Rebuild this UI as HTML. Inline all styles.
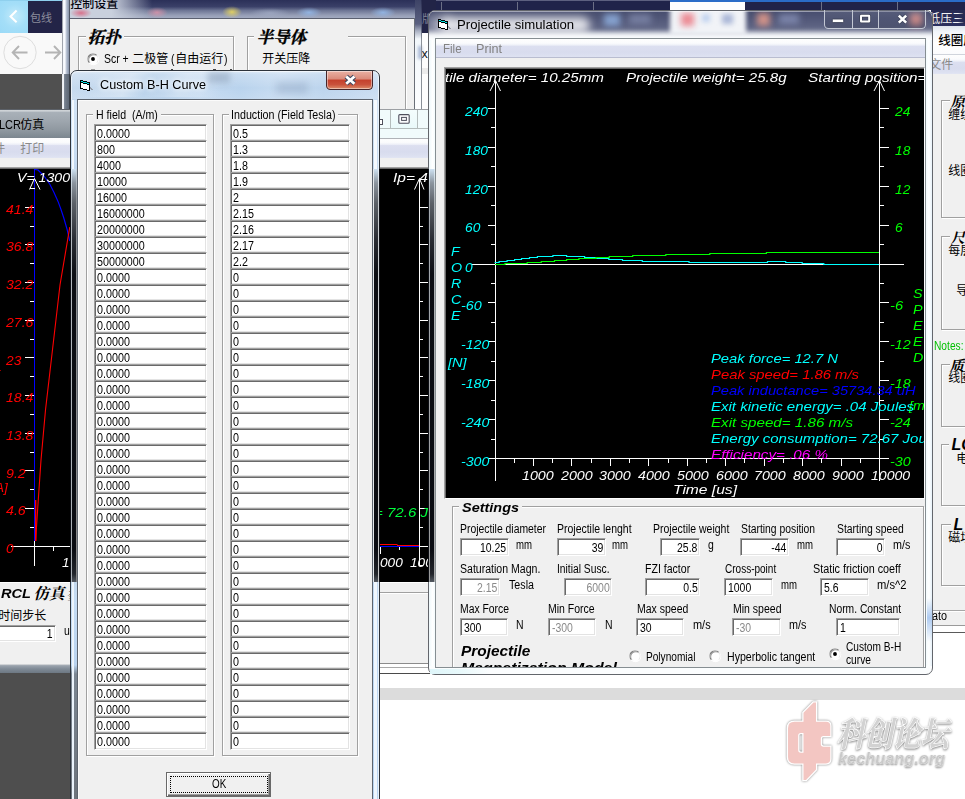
<!DOCTYPE html>
<html><head><meta charset="utf-8"><title>Projectile simulation</title>
<style>
html,body{margin:0;padding:0;}
body{width:965px;height:799px;overflow:hidden;background:#fff;position:relative;font-family:"Liberation Sans",sans-serif;font-size:12px;}
div,svg.a{position:absolute;box-sizing:border-box;}
.t{white-space:pre;}
.f{background:#fff;border-top:1px solid #a0a0a0;border-left:1px solid #a0a0a0;border-right:1px solid #fff;border-bottom:1px solid #fff;box-shadow:inset 1px 1px 0 #696969,inset -1px -1px 0 #e3e3e3;}
.g{border:1px solid #a0a0a0;box-shadow:1px 1px 0 #fff, inset 1px 1px 0 #fff;}
.r{border-radius:50%;background:#fff;border:1px solid;border-color:#6e6e6e #e8e8e8 #fdfdfd #6e6e6e;box-shadow:inset 1px 1px 0 #9a9a9a, 0.5px 0.5px 0 #fff;transform:scale(.96);}
.r.on::after{content:"";position:absolute;left:3px;top:3px;width:4px;height:4px;border-radius:50%;background:#000;}
svg.a text{font-family:"Liberation Sans","Noto Sans CJK SC",sans-serif;}
svg.a text.s{font-family:"Liberation Serif","Noto Serif CJK SC",serif;font-weight:bold;}
</style></head><body>
<div style="left:62px;top:0px;width:903px;height:10px;background:#20234a"></div>
<div style="left:420px;top:0px;width:250px;height:1px;background:#5d6080"></div>
<div style="left:670px;top:0px;width:295px;height:2px;background:#2a6cc8"></div>
<div style="left:670px;top:2px;width:75px;height:8px;background:#fdfdfe"></div>
<div style="left:441.3px;top:1.5px;width:1px;height:8.5px;background:#6c6f86"></div>
<div style="left:517.3px;top:1.5px;width:1px;height:8.5px;background:#6c6f86"></div>
<div style="left:593.0px;top:1.5px;width:1px;height:8.5px;background:#6c6f86"></div>
<div style="left:820.9px;top:1.5px;width:1px;height:8.5px;background:#6c6f86"></div>
<div style="left:897.2px;top:1.5px;width:1px;height:8.5px;background:#6c6f86"></div>
<div style="left:0px;top:0px;width:28px;height:32.5px;background:radial-gradient(circle at 15px 16px,#c4ebfb 0,#a4def8 12px,#9bdaf7 100%)"></div>
<svg class="a" style="left:8px;top:9px" width="12" height="15"><path d="M8.6 1.6 L2.6 7.4 L8.6 13.2" fill="none" stroke="#fff" stroke-width="2.1"/></svg>
<div style="left:28px;top:1px;width:34px;height:31.5px;background:#232447"></div>
<div style="left:0px;top:0px;width:62px;height:1px;background:#8fd0ee"></div>
<svg class="a" style="left:29.40px;top:11.00px;" width="26.4" height="15.4"><text x="1.1" y="11" font-size="11" fill="#8b8c9c">包线</text></svg>
<div style="left:0px;top:32.5px;width:62px;height:41.5px;background:#f9f9f9"></div>
<svg class="a" style="left:0;top:32px" width="62" height="42"><circle cx="20" cy="20.5" r="16.2" fill="none" stroke="#dedede" stroke-width="1"/><path d="M27.5 20.5H13M19 14l-6.3 6.5 6.3 6.5M45 20.5h15M54 14l6.3 6.5-6.3 6.5" fill="none" stroke="#b4b4b4" stroke-width="1.9"/></svg>
<div style="left:0px;top:74px;width:62px;height:35px;background:#505050"></div>
<div style="left:0px;top:673px;width:72px;height:126px;background:#4e4e4e"></div>
<div style="left:380px;top:688px;width:585px;height:11.5px;background:#dcdcdc"></div>
<div style="left:420px;top:0px;width:16px;height:32.5px;background:#222447"></div>
<div style="left:420px;top:32.5px;width:16px;height:79px;background:#fdfdfd"></div>
<div style="left:420px;top:67.5px;width:16px;height:6px;background:#ececec"></div>
<svg class="a" style="left:421.40px;top:11.50px;" width="15.4" height="15.4"><text x="1.1" y="11" font-size="11" fill="#7e8095">版</text></svg>
<div class="t" style="top:47.00px;font-size:12.5px;line-height:14px;color:#111;left:421.5px;transform-origin:0 0;">x1</div>
<div style="left:62px;top:0px;width:360px;height:111px;background:#f0f0f0"></div>
<div style="left:62px;top:0px;width:353px;height:18.5px;background:linear-gradient(180deg,#2b3058 0,#3a4068 35%,#6d7594 55%,#969eb6 80%,#a6aec4 100%)"></div>
<div style="left:62px;top:0px;width:90px;height:18.5px;background:linear-gradient(90deg,#c9d0dd 0,#c9d0dd 55%,rgba(201,208,221,0) 100%)"></div>
<div style="left:70px;top:8px;width:22px;height:10px;background:radial-gradient(ellipse at center,rgba(220,90,120,.8) 0,rgba(220,90,120,0) 70%)"></div>
<div style="left:146px;top:7px;width:22px;height:11px;background:radial-gradient(ellipse at center,rgba(235,150,170,.7) 0,rgba(235,150,170,0) 70%)"></div>
<div style="left:222px;top:6px;width:20px;height:12px;background:radial-gradient(ellipse at center,rgba(240,220,90,.85) 0,rgba(240,220,90,0) 70%)"></div>
<div style="left:296px;top:7px;width:26px;height:11px;background:radial-gradient(ellipse at center,rgba(150,190,240,.8) 0,rgba(150,190,240,0) 70%)"></div>
<div style="left:370px;top:7px;width:26px;height:11px;background:radial-gradient(ellipse at center,rgba(150,190,240,.8) 0,rgba(150,190,240,0) 70%)"></div>
<div style="left:250px;top:8px;width:40px;height:10px;background:radial-gradient(ellipse at center,rgba(170,180,205,.6) 0,rgba(170,180,205,0) 70%)"></div>
<svg class="a" style="left:69.10px;top:-4.20px;" width="52.8" height="16.8"><text x="1.2" y="12" font-size="12" font-weight="500" fill="#05050f">控制设置</text></svg>
<div style="left:69px;top:18px;width:346px;height:1px;background:#5b6070"></div>
<div style="left:62px;top:0px;width:8px;height:74px;background:linear-gradient(90deg,#9a9ea6 0,#a8acb4 1px,#f4f7fc 1.5px,#fbfcff 3px,#c6cfde 4px,#a3aec2 5.5px,#8893a8 7px,#4f5664 7.2px,#4f5664 8px)"></div>
<div style="left:62px;top:74px;width:8px;height:37px;background:linear-gradient(90deg,#e9edf2 0,#f2f4f7 1.6px,#7f8997 2.2px,#6d7785 4px,#5e6876 7px,#3a4048 7.2px,#3a4048 8px)"></div>
<div style="left:414px;top:18px;width:1px;height:93px;background:#6a6f78"></div>
<div style="left:415px;top:0px;width:7px;height:111px;background:linear-gradient(180deg,#3d4366 0,#5a6080 24px,#a9b0c2 31px,#f2f7fb 39px,#fdfeff 100%)"></div>
<div style="left:418px;top:46px;width:3.5px;height:13px;background:rgba(140,160,200,.7);filter:blur(1.5px)"></div>
<div style="left:421px;top:0px;width:1px;height:111px;background:linear-gradient(180deg,#2a2e52 0,#60657c 30px,#8a9098 40px,#8a9098 100%)"></div>
<div class="g" style="left:78px;top:36px;width:156px;height:75px;border-bottom:none"></div>
<div style="left:86px;top:30px;width:37.5px;height:14px;background:#f0f0f0"></div>
<svg class="a" style="left:86.35px;top:26.10px;" width="39.6" height="23.1"><text class="s" transform="translate(1.65,16.50) skewX(-14)" font-size="16.5" fill="#000" stroke="#000" stroke-width="0.35">拓扑</text></svg>
<div class="g" style="left:247px;top:36px;width:159px;height:75px;border-bottom:none"></div>
<div style="left:254px;top:30px;width:94px;height:14px;background:#f0f0f0"></div>
<svg class="a" style="left:254.55px;top:26.10px;" width="56.1" height="23.1"><text class="s" transform="translate(1.65,16.50) skewX(-14)" font-size="16.5" fill="#000" stroke="#000" stroke-width="0.35">半导体</text></svg>
<div class="r on" style="left:86.5px;top:52.5px;width:12px;height:12px;"></div>
<div class="t" style="top:52.00px;font-size:12px;line-height:14px;color:#000;left:103.8px;transform-origin:0 0;transform:scaleX(0.870);">Scr +</div>
<svg class="a" style="left:130.60px;top:51.00px;" width="40.8" height="16.8"><text x="1.2" y="12" font-size="12" fill="#000">二极管</text></svg>
<div class="t" style="top:52.00px;font-size:12px;line-height:14px;color:#000;left:171px;transform-origin:0 0;transform:scaleX(0.870);">(</div>
<svg class="a" style="left:174.00px;top:51.00px;" width="52.8" height="16.8"><text x="1.2" y="12" font-size="12" fill="#000">自由运行</text></svg>
<div class="t" style="top:52.00px;font-size:12px;line-height:14px;color:#000;left:223.5px;transform-origin:0 0;transform:scaleX(0.870);">)</div>
<svg class="a" style="left:260.80px;top:51.00px;" width="52.8" height="16.8"><text x="1.2" y="12" font-size="12" fill="#000">开关压降</text></svg>
<div style="left:91px;top:69px;width:4px;height:1px;background:#9a9a9a"></div>
<div style="left:171px;top:68.5px;width:2px;height:1.5px;background:#444"></div>
<div style="left:213px;top:68.5px;width:3px;height:1.5px;background:#444"></div>
<div style="left:230px;top:68.5px;width:2px;height:1.5px;background:#444"></div>
<div style="left:0px;top:109px;width:72px;height:29px;background:linear-gradient(180deg,#5c6168 0,#5c6168 1px,#d2d6da 1.2px,#c0c6cc 2.5px,#a9b1b9 10%,#9ea6ae 42%,#8e979f 75%,#7c868f 100%)"></div>
<div style="left:380px;top:109px;width:56px;height:29.5px;background:#f1fbfc"></div>
<div style="left:380px;top:109px;width:56px;height:1px;background:#9c9fa3"></div>
<div style="left:390px;top:110px;width:1px;height:19px;background:#b4bcbc"></div>
<div style="left:417px;top:110px;width:1px;height:19px;background:#b4bcbc"></div>
<div style="left:380px;top:128px;width:56px;height:1px;background:#b4bcbc"></div>
<div style="left:391px;top:110px;width:26px;height:18px;background:linear-gradient(180deg,#f4fdfd,#eaf9fa)"></div>
<svg class="a" style="left:397px;top:113px" width="14" height="12"><rect x="1.8" y="1.6" width="10.4" height="8.6" rx="1" fill="#fbfbfd" stroke="#4f4f5c" stroke-width="1.1"/><rect x="4.6" y="4.4" width="4.8" height="3" fill="none" stroke="#4f4f5c" stroke-width="1"/></svg>
<div style="left:377px;top:119px;width:6px;height:5.5px;border:1px solid #50505c;background:#fff"></div>
<div class="t" style="top:118.00px;font-size:12px;line-height:14px;color:#000;left:-1.5px;transform-origin:0 0;transform:scaleX(0.916);">LCR</div>
<svg class="a" style="left:19.00px;top:116.60px;" width="28.8" height="16.8"><text x="1.2" y="12" font-size="12" fill="#000">仿真</text></svg>
<div style="left:0px;top:138px;width:436px;height:19.5px;background:linear-gradient(180deg,#fefefe 0,#fafbfd 22%,#eef0f8 32%,#dcdff0 38%,#d8dcee 70%,#dde1f1 92%,#e2e5f3 100%)"></div>
<div style="left:380px;top:138px;width:56px;height:1px;background:#b0b3b8"></div>
<svg class="a" style="left:-8.20px;top:141.20px;" width="16.8" height="16.8"><text x="1.2" y="12" font-size="12" fill="#8a8a8a">件</text></svg>
<svg class="a" style="left:19.30px;top:141.20px;" width="28.8" height="16.8"><text x="1.2" y="12" font-size="12" fill="#8a8a8a">打印</text></svg>
<div style="left:0px;top:157.5px;width:436px;height:11px;background:#f0f0f0"></div>
<div style="left:-2px;top:167px;width:440px;height:416px;background:#000;border-top:1px solid #a0a0a0;border-bottom:1px solid #fff;box-shadow:inset 0 1px 0 #696969"></div>
<div style="left:0px;top:583px;width:436px;height:81px;background:#f0f0f0"></div>
<div style="left:380px;top:592px;width:56px;height:1px;background:#a0a0a0"></div>
<div style="left:380px;top:593px;width:56px;height:1px;background:#fff"></div>
<div style="left:380px;top:663px;width:56px;height:1px;background:#8c8c8c"></div>
<div style="left:380px;top:664px;width:56px;height:9px;background:#fff"></div>
<div style="left:380px;top:667px;width:56px;height:1px;background:#a9a9a9"></div>
<div style="left:380px;top:673px;width:56px;height:1px;background:#4a4a4a"></div>
<div style="left:0px;top:664px;width:72px;height:9px;background:linear-gradient(180deg,#e8e8e8 0,#9aa3ad 18%,#7f8a96 55%,#6d7883 100%)"></div>
<div class="t" style="top:586.00px;font-size:13.33px;line-height:15px;color:#000;font-weight:bold;font-style:italic;left:0.8px;transform-origin:0 0;transform:scaleX(1.095);">RCL</div>
<svg class="a" style="left:31.95px;top:582.50px;" width="37.2" height="21.7"><text class="s" transform="translate(1.55,15.50) skewX(-14)" font-size="15.5" fill="#000">仿真</text></svg>
<svg class="a" style="left:64.95px;top:582.50px;" width="21.7" height="21.7"><text class="s" transform="translate(1.55,15.50) skewX(-14)" font-size="15.5" fill="#000">参</text></svg>
<svg class="a" style="left:-3.20px;top:608.30px;" width="52.8" height="16.8"><text x="1.2" y="12" font-size="12" fill="#000">时间步长</text></svg>
<div class="f" style="left:-3px;top:625px;width:58.5px;height:17px;"></div>
<div class="t" style="top:627.00px;font-size:12px;line-height:14px;color:#000;right:912.5px;transform-origin:100% 0;transform:scaleX(0.870);">1</div>
<div class="t" style="top:624.00px;font-size:12px;line-height:14px;color:#000;left:64px;transform-origin:0 0;transform:scaleX(0.870);">u</div>
<svg class="a" style="left:0;top:0" width="436" height="600" shape-rendering="auto"><path d="M34.5 169L34.5 541" stroke="#0000ff" stroke-width="1"/><path d="M35.7 500L35.7 541" stroke="#ff0000" stroke-width="1.4"/><path d="M34.5 541L34.5 566" stroke="#fff" stroke-width="1"/><path d="M11 546.5L72 546.5" stroke="#fff" stroke-width="1"/><path d="M29.5 189.5L34.5 178.5L40 189.5M30 188.5H35" fill="none" stroke="#fff" stroke-width="1"/><path d="M25 207.5L34 207.5" stroke="#fff" stroke-width="1"/><path d="M30 226.5L34 226.5" stroke="#fff" stroke-width="1"/><path d="M25 244.5L34 244.5" stroke="#fff" stroke-width="1"/><path d="M30 263.5L34 263.5" stroke="#fff" stroke-width="1"/><path d="M25 282.5L34 282.5" stroke="#fff" stroke-width="1"/><path d="M30 301.5L34 301.5" stroke="#fff" stroke-width="1"/><path d="M25 320.5L34 320.5" stroke="#fff" stroke-width="1"/><path d="M30 339.5L34 339.5" stroke="#fff" stroke-width="1"/><path d="M25 357.5L34 357.5" stroke="#fff" stroke-width="1"/><path d="M30 376.5L34 376.5" stroke="#fff" stroke-width="1"/><path d="M25 395.5L34 395.5" stroke="#fff" stroke-width="1"/><path d="M30 414.5L34 414.5" stroke="#fff" stroke-width="1"/><path d="M25 433.5L34 433.5" stroke="#fff" stroke-width="1"/><path d="M30 452.5L34 452.5" stroke="#fff" stroke-width="1"/><path d="M25 470.5L34 470.5" stroke="#fff" stroke-width="1"/><path d="M30 489.5L34 489.5" stroke="#fff" stroke-width="1"/><path d="M25 508.5L34 508.5" stroke="#fff" stroke-width="1"/><path d="M30 527.5L34 527.5" stroke="#fff" stroke-width="1"/><path d="M35 169.5L38 170L44 176L49.7 184L54 192.5L58 201.4L61 209.5L63.8 218L67 229L69.8 241" fill="none" stroke="#0000ff" stroke-width="1.15" stroke-linejoin="round"/><path d="M69.8 227L60 285L51.3 360L45.5 410L41 460L37.6 510L35.6 541" fill="none" stroke="#ff0000" stroke-width="1.1"/><path d="M53.5 547L53.5 551" stroke="#fff" stroke-width="1"/><path d="M419.5 180L419.5 566" stroke="#fff" stroke-width="1"/><path d="M414.5 189.5L419.5 178.5L424 189.5" fill="none" stroke="#fff" stroke-width="1"/><path d="M420 207.5L428 207.5" stroke="#fff" stroke-width="1"/><path d="M420 226.5L423 226.5" stroke="#fff" stroke-width="1"/><path d="M420 244.5L428 244.5" stroke="#fff" stroke-width="1"/><path d="M420 263.5L423 263.5" stroke="#fff" stroke-width="1"/><path d="M420 282.5L428 282.5" stroke="#fff" stroke-width="1"/><path d="M420 301.5L423 301.5" stroke="#fff" stroke-width="1"/><path d="M420 320.5L428 320.5" stroke="#fff" stroke-width="1"/><path d="M420 339.5L423 339.5" stroke="#fff" stroke-width="1"/><path d="M420 357.5L428 357.5" stroke="#fff" stroke-width="1"/><path d="M420 376.5L423 376.5" stroke="#fff" stroke-width="1"/><path d="M420 395.5L428 395.5" stroke="#fff" stroke-width="1"/><path d="M420 414.5L423 414.5" stroke="#fff" stroke-width="1"/><path d="M420 433.5L428 433.5" stroke="#fff" stroke-width="1"/><path d="M420 452.5L423 452.5" stroke="#fff" stroke-width="1"/><path d="M420 470.5L428 470.5" stroke="#fff" stroke-width="1"/><path d="M420 489.5L423 489.5" stroke="#fff" stroke-width="1"/><path d="M420 508.5L428 508.5" stroke="#fff" stroke-width="1"/><path d="M420 527.5L423 527.5" stroke="#fff" stroke-width="1"/><path d="M420 546.5L428 546.5" stroke="#fff" stroke-width="1"/><path d="M420 565.5L423 565.5" stroke="#fff" stroke-width="1"/><path d="M380 546.5L428 546.5" stroke="#fff" stroke-width="1"/><path d="M380 546.5L419 546.5" stroke="#0000ff" stroke-width="1"/><path d="M380 544.5L397.5 544.5" stroke="#ff0000" stroke-width="1"/><path d="M397 545.5L419 545.5" stroke="#ff0000" stroke-width="1"/><path d="M380.5 547L380.5 554" stroke="#fff" stroke-width="1"/><path d="M399.5 547L399.5 550" stroke="#fff" stroke-width="1"/></svg>
<div class="t" style="top:171.00px;font-size:12.5px;line-height:14px;color:#fff;font-style:italic;left:17px;transform-origin:0 0;transform:scaleX(1.130);">V= 1300</div>
<div class="t" style="top:171.00px;font-size:12.5px;line-height:14px;color:#fff;font-style:italic;left:393.2px;transform-origin:0 0;transform:scaleX(1.243);">Ip= 4</div>
<div class="t" style="top:203.00px;font-size:12.5px;line-height:14px;color:#ff0000;font-style:italic;left:5.5px;transform-origin:0 0;transform:scaleX(1.124);">41.4</div>
<div class="t" style="top:240.00px;font-size:12.5px;line-height:14px;color:#ff0000;font-style:italic;left:5.5px;transform-origin:0 0;transform:scaleX(1.124);">36.8</div>
<div class="t" style="top:278.00px;font-size:12.5px;line-height:14px;color:#ff0000;font-style:italic;left:5.5px;transform-origin:0 0;transform:scaleX(1.124);">32.2</div>
<div class="t" style="top:316.00px;font-size:12.5px;line-height:14px;color:#ff0000;font-style:italic;left:5.5px;transform-origin:0 0;transform:scaleX(1.124);">27.6</div>
<div class="t" style="top:354.00px;font-size:12.5px;line-height:14px;color:#ff0000;font-style:italic;left:5.5px;transform-origin:0 0;transform:scaleX(1.100);">23</div>
<div class="t" style="top:391.00px;font-size:12.5px;line-height:14px;color:#ff0000;font-style:italic;left:5.5px;transform-origin:0 0;transform:scaleX(1.124);">18.4</div>
<div class="t" style="top:429.00px;font-size:12.5px;line-height:14px;color:#ff0000;font-style:italic;left:5.5px;transform-origin:0 0;transform:scaleX(1.124);">13.8</div>
<div class="t" style="top:467.00px;font-size:12.5px;line-height:14px;color:#ff0000;font-style:italic;left:5.5px;transform-origin:0 0;transform:scaleX(1.134);">9.2</div>
<div class="t" style="top:504.00px;font-size:12.5px;line-height:14px;color:#ff0000;font-style:italic;left:5.5px;transform-origin:0 0;transform:scaleX(1.134);">4.6</div>
<div class="t" style="top:542.00px;font-size:12.5px;line-height:14px;color:#ff0000;font-style:italic;left:5.5px;transform-origin:0 0;transform:scaleX(1.100);">0</div>
<div class="t" style="top:368.00px;font-size:12.5px;line-height:14px;color:#ff0000;font-style:italic;left:-4px;transform-origin:0 0;transform:scaleX(1.080);">[</div>
<div class="t" style="top:481.00px;font-size:12.5px;line-height:14px;color:#ff0000;font-style:italic;left:-5px;transform-origin:0 0;transform:scaleX(1.080);">A]</div>
<div class="t" style="top:556.00px;font-size:12.5px;line-height:14px;color:#fff;font-style:italic;left:61.5px;transform-origin:0 0;transform:scaleX(1.080);">1</div>
<div class="t" style="top:506.00px;font-size:12.5px;line-height:14px;color:#00fa3c;font-style:italic;left:373.6px;transform-origin:0 0;transform:scaleX(1.205);">= 72.6 J</div>
<div class="t" style="top:556.00px;font-size:12.5px;line-height:14px;color:#fff;font-style:italic;left:379.6px;transform-origin:0 0;transform:scaleX(1.093);">000</div>
<div class="t" style="top:556.00px;font-size:12.5px;line-height:14px;color:#fff;font-style:italic;left:409.8px;transform-origin:0 0;transform:scaleX(1.093);">100</div>
<div style="left:931px;top:10px;width:34px;height:16px;background:linear-gradient(180deg,#262a52,#2c3160)"></div>
<svg class="a" style="left:927.30px;top:11.00px;" width="40.8" height="16.8"><text x="1.2" y="12" font-size="12" fill="#f2f2f2">低压三</text></svg>
<div style="left:958px;top:12px;width:7px;height:12px;background:linear-gradient(90deg,rgba(38,42,82,0),#262a52)"></div>
<div style="left:931px;top:26px;width:34px;height:28.5px;background:linear-gradient(180deg,#dfe5ee 0,#f3f6fa 20%,#fff 60%,#fafbfd 100%)"></div>
<svg class="a" style="left:936.55px;top:31.70px;" width="42.5" height="17.5"><text x="1.25" y="12.5" font-size="12.5" font-weight="500" fill="#000">线圈层</text></svg>
<div style="left:931px;top:54.5px;width:34px;height:19px;background:linear-gradient(180deg,#fefefe 0,#fafbfd 22%,#eef0f8 32%,#dcdff0 38%,#d8dcee 70%,#dde1f1 92%,#e2e5f3 100%)"></div>
<div style="left:931px;top:54px;width:34px;height:1px;background:#d0d4dc"></div>
<svg class="a" style="left:928.30px;top:57.00px;" width="28.8" height="16.8"><text x="1.2" y="12" font-size="12" fill="#8a8a8a">文件</text></svg>
<div style="left:931px;top:73.5px;width:34px;height:537px;background:#f0f0f0"></div>
<div style="left:931px;top:610px;width:34px;height:15px;background:#f0f0f0;border-top:1px solid #a7a7a7;box-shadow:inset 0 1px 0 #fff"></div>
<div style="left:931px;top:625px;width:34px;height:1px;background:#9a9a9a"></div>
<div style="left:931px;top:626px;width:34px;height:6px;background:#fff"></div>
<div style="left:931px;top:632px;width:34px;height:1px;background:#5a5a5a"></div>
<div class="t" style="top:609.00px;font-size:12px;line-height:14px;color:#000;left:932.2px;transform-origin:0 0;transform:scaleX(0.900);">ato</div>
<div class="t" style="top:339.00px;font-size:12px;line-height:14px;color:#00c000;left:934px;transform-origin:0 0;transform:scaleX(0.851);">Notes:</div>
<div class="g" style="left:941px;top:100px;width:40px;height:118px;"></div>
<div class="g" style="left:941px;top:236px;width:40px;height:94px;"></div>
<div class="g" style="left:941px;top:364px;width:40px;height:63px;"></div>
<div class="g" style="left:941px;top:444px;width:40px;height:62px;"></div>
<div class="g" style="left:941px;top:524px;width:40px;height:62px;"></div>
<div style="left:950px;top:93px;width:15px;height:16px;background:#f0f0f0"></div>
<svg class="a" style="left:949.05px;top:92.00px;" width="20.3" height="20.3"><text class="s" transform="translate(1.45,14.50) skewX(-14)" font-size="14.5" fill="#000">原</text></svg>
<svg class="a" style="left:947.30px;top:107.00px;" width="28.8" height="16.8"><text x="1.2" y="12" font-size="12" fill="#000">缠绕</text></svg>
<svg class="a" style="left:947.30px;top:162.50px;" width="28.8" height="16.8"><text x="1.2" y="12" font-size="12" fill="#000">线圈</text></svg>
<div style="left:950px;top:229px;width:15px;height:16px;background:#f0f0f0"></div>
<svg class="a" style="left:949.05px;top:227.50px;" width="20.3" height="20.3"><text class="s" transform="translate(1.45,14.50) skewX(-14)" font-size="14.5" fill="#000">尺</text></svg>
<svg class="a" style="left:947.30px;top:243.00px;" width="28.8" height="16.8"><text x="1.2" y="12" font-size="12" fill="#000">每层</text></svg>
<svg class="a" style="left:955.30px;top:283.00px;" width="16.8" height="16.8"><text x="1.2" y="12" font-size="12" fill="#000">导</text></svg>
<div style="left:950px;top:357px;width:15px;height:16px;background:#f0f0f0"></div>
<svg class="a" style="left:948.25px;top:355.70px;" width="20.3" height="20.3"><text class="s" transform="translate(1.45,14.50) skewX(-14)" font-size="14.5" fill="#000">质</text></svg>
<svg class="a" style="left:947.30px;top:370.30px;" width="28.8" height="16.8"><text x="1.2" y="12" font-size="12" fill="#000">线圈</text></svg>
<div style="left:949px;top:436px;width:16px;height:15px;background:#f0f0f0"></div>
<div class="t" style="top:436.00px;font-size:16px;line-height:17px;color:#000;font-weight:bold;font-style:italic;left:951.5px;transform-origin:0 0;">LC</div>
<svg class="a" style="left:955.30px;top:450.50px;" width="16.8" height="16.8"><text x="1.2" y="12" font-size="12" fill="#000">电</text></svg>
<div style="left:951px;top:516px;width:14px;height:15px;background:#f0f0f0"></div>
<div class="t" style="top:516.00px;font-size:16px;line-height:17px;color:#000;font-weight:bold;font-style:italic;left:953.6px;transform-origin:0 0;">L</div>
<svg class="a" style="left:947.30px;top:530.00px;" width="28.8" height="16.8"><text x="1.2" y="12" font-size="12" fill="#000">磁场</text></svg>
<div style="left:428px;top:10px;width:505px;height:665px;border-radius:7px;border:1px solid #63666c;background:#fbfdfe;box-shadow:inset 0 0 0 1px rgba(255,255,255,.3)"></div>
<div style="left:429px;top:11px;width:503px;height:28px;overflow:hidden;border-radius:6px 6px 0 0;background:#f9fbfd">
<div style="left:-8px;top:-6px;width:520px;height:26.5px;background:linear-gradient(180deg,#3f4566,#555b7c 60%,#666c8a);filter:blur(2.6px)"></div>
<div style="left:241px;top:-6px;width:75.5px;height:30px;background:#f1f3f7;filter:blur(2.2px)"></div>
<div style="left:11px;top:6px;width:150px;height:16px;background:rgba(255,255,255,.8);filter:blur(4.5px);border-radius:8px"></div>
<div style="left:0px;top:4px;width:22px;height:18px;background:rgba(255,255,255,.35);filter:blur(4px)"></div>
<div style="left:175px;top:3px;width:16px;height:12px;background:rgba(150,185,235,.75);filter:blur(3px)"></div>
<div style="left:200px;top:3px;width:22px;height:10px;background:rgba(140,150,185,.6);filter:blur(3px)"></div>
<div style="left:252px;top:2px;width:13px;height:13px;background:rgba(235,120,130,.85);filter:blur(3px)"></div>
<div style="left:273px;top:3px;width:8px;height:8px;background:rgba(170,195,235,.7);filter:blur(2.5px)"></div>
<div style="left:293px;top:3px;width:11px;height:10px;background:rgba(150,165,205,.75);filter:blur(2.5px)"></div>
<div style="left:328px;top:2px;width:13px;height:13px;background:rgba(240,160,140,.8);filter:blur(3px)"></div>
<div style="left:350px;top:3px;width:20px;height:10px;background:rgba(140,150,190,.7);filter:blur(3px)"></div>
<div style="left:481px;top:2px;width:12px;height:13px;background:rgba(250,160,150,.95);filter:blur(3px)"></div>
<div style="left:0px;top:0px;width:503px;height:1px;background:rgba(255,255,255,.45)"></div>
</div>
<div style="left:429px;top:40px;width:6px;height:626px;background:linear-gradient(90deg,#eef8fb,#ffffff 60%,#f4fbfd)"></div>
<div style="left:926px;top:40px;width:6px;height:626px;background:linear-gradient(90deg,#f4fbfd,#ffffff 50%,#e6f1f9)"></div>
<div style="left:428px;top:169px;width:8px;height:413px;background:#0c0e14"></div>
<div style="left:429px;top:169px;width:1px;height:413px;background:linear-gradient(180deg,#e0eef8 0,#a4a9ae 30px,#999 100%)"></div>
<div style="left:430px;top:169px;width:4px;height:413px;background:linear-gradient(180deg,#cfe2f2 0,#8b949e 14px,#5c6168 34px,#2a2d34 70px,#0c0e14 105px,#0a0c12 380px,#22252b 405px,#5a6068 414px)"></div>
<div style="left:434px;top:169px;width:1px;height:413px;background:linear-gradient(180deg,#e0eef8 0,#b0b4b8 30px,#a8a8a8 100%)"></div>
<div style="left:435px;top:169px;width:1px;height:413px;background:#33363a"></div>
<div style="left:927px;top:598px;width:5px;height:44px;background:linear-gradient(180deg,rgba(170,200,240,0),rgba(170,200,240,.95) 45%,rgba(170,200,240,0))"></div>
<div style="left:430px;top:668.5px;width:60px;height:5px;background:linear-gradient(90deg,#dff6fa,#e8f9fb 50%,rgba(255,255,255,0))"></div>
<svg class="a" style="left:438px;top:19px" width="14" height="12" shape-rendering="crispEdges"><path d="M0 0h3v1h4v1h3v9h-3v-1h-4v-1h-3z" fill="#000"/><path d="M1 3h2v1h4v1h2v5h-2v-1h-4v-1h-2z" fill="#fff"/><path d="M1 1h2v1h-2zM3 2h4v1h-4zM7 3h2v1h-2z" fill="#00e4e4"/><path d="M10 7h1v1h1v1h1v1h-2v-1h-1z" fill="#8a8f98" opacity=".8"/></svg>
<div class="t" style="top:18.00px;font-size:12.5px;line-height:14px;color:#000;left:457px;transform-origin:0 0;transform:scaleX(1.053);">Projectile simulation</div>
<div style="left:824px;top:10px;width:102px;height:18.5px;border:1px solid #c3c8d4;border-top:none;border-radius:0 0 4.5px 4.5px;background:linear-gradient(180deg,rgba(120,126,150,.35),rgba(70,76,100,.25) 50%,rgba(40,46,70,.35))"></div>
<div style="left:852px;top:10px;width:1px;height:18px;background:#c3c8d4"></div>
<div style="left:878px;top:10px;width:1px;height:18px;background:#c3c8d4"></div>
<svg class="a" style="left:824px;top:10px" width="102" height="19"><rect x="8.3" y="9" width="11.4" height="3.6" rx=".8" fill="#fff" stroke="#3c4258" stroke-width=".9"/><rect x="37" y="5.8" width="8.2" height="5.8" rx=".5" fill="none" stroke="#3c4258" stroke-width="3.4"/><rect x="37" y="5.8" width="8.2" height="5.8" rx=".3" fill="none" stroke="#fff" stroke-width="2"/><path d="M74.8 5.6l7.4 7M82.2 5.6l-7.4 7" stroke="#3c4258" stroke-width="4"/><path d="M74.8 5.6l7.4 7M82.2 5.6l-7.4 7" stroke="#fff" stroke-width="2.6"/></svg>
<div style="left:435px;top:38px;width:491px;height:630px;background:#f0f0f0;border:1px solid #868e92"></div>
<div style="left:436px;top:39px;width:489px;height:19px;background:linear-gradient(180deg,#fefefe 0,#fafbfd 22%,#eef0f8 32%,#dcdff0 38%,#d8dcee 70%,#dde1f1 92%,#e2e5f3 100%)"></div>
<div style="left:436px;top:57px;width:489px;height:1px;background:#b9bdd0"></div>
<div class="t" style="top:42.00px;font-size:12.5px;line-height:14px;color:#828282;left:443.3px;transform-origin:0 0;transform:scaleX(0.923);">File</div>
<div class="t" style="top:42.00px;font-size:12.5px;line-height:14px;color:#828282;left:476.4px;transform-origin:0 0;transform:scaleX(1.012);">Print</div>
<div style="left:444px;top:67px;width:481px;height:432px;background:#000;border-left:1px solid #a0a0a0;border-top:1px solid #a0a0a0;border-right:1px solid #fff;border-bottom:1px solid #fff;box-shadow:inset 1px 1px 0 #696969"></div>
<svg class="a" style="left:0;top:0" width="965" height="500"><path d="M495.5 81V481" fill="none" stroke="#fff" stroke-width="1"/><path d="M472 264.5H904" fill="none" stroke="#fff" stroke-width="1"/><path d="M495 458.5H879" fill="none" stroke="#fff" stroke-width="1"/><path d="M879.5 81V481" fill="none" stroke="#fff" stroke-width="1"/><path d="M490 91L495.5 80.5L500.5 91" fill="none" stroke="#fff" stroke-width="1"/><path d="M874 91L879.5 80.5L884.5 91" fill="none" stroke="#fff" stroke-width="1"/><path d="M488 108.5H495" fill="none" stroke="#fff" stroke-width="1"/><path d="M879 108.5H889" fill="none" stroke="#fff" stroke-width="1"/><path d="M491 127.5H495" fill="none" stroke="#fff" stroke-width="1"/><path d="M879 127.5H884" fill="none" stroke="#fff" stroke-width="1"/><path d="M488 147.5H495" fill="none" stroke="#fff" stroke-width="1"/><path d="M879 147.5H889" fill="none" stroke="#fff" stroke-width="1"/><path d="M491 166.5H495" fill="none" stroke="#fff" stroke-width="1"/><path d="M879 166.5H884" fill="none" stroke="#fff" stroke-width="1"/><path d="M488 186.5H495" fill="none" stroke="#fff" stroke-width="1"/><path d="M879 186.5H889" fill="none" stroke="#fff" stroke-width="1"/><path d="M491 205.5H495" fill="none" stroke="#fff" stroke-width="1"/><path d="M879 205.5H884" fill="none" stroke="#fff" stroke-width="1"/><path d="M488 225.5H495" fill="none" stroke="#fff" stroke-width="1"/><path d="M879 225.5H889" fill="none" stroke="#fff" stroke-width="1"/><path d="M491 244.5H495" fill="none" stroke="#fff" stroke-width="1"/><path d="M879 244.5H884" fill="none" stroke="#fff" stroke-width="1"/><path d="M488 264.5H495" fill="none" stroke="#fff" stroke-width="1"/><path d="M879 264.5H889" fill="none" stroke="#fff" stroke-width="1"/><path d="M491 283.5H495" fill="none" stroke="#fff" stroke-width="1"/><path d="M879 283.5H884" fill="none" stroke="#fff" stroke-width="1"/><path d="M488 302.5H495" fill="none" stroke="#fff" stroke-width="1"/><path d="M879 302.5H889" fill="none" stroke="#fff" stroke-width="1"/><path d="M491 322.5H495" fill="none" stroke="#fff" stroke-width="1"/><path d="M879 322.5H884" fill="none" stroke="#fff" stroke-width="1"/><path d="M488 341.5H495" fill="none" stroke="#fff" stroke-width="1"/><path d="M879 341.5H889" fill="none" stroke="#fff" stroke-width="1"/><path d="M491 361.5H495" fill="none" stroke="#fff" stroke-width="1"/><path d="M879 361.5H884" fill="none" stroke="#fff" stroke-width="1"/><path d="M488 380.5H495" fill="none" stroke="#fff" stroke-width="1"/><path d="M879 380.5H889" fill="none" stroke="#fff" stroke-width="1"/><path d="M491 400.5H495" fill="none" stroke="#fff" stroke-width="1"/><path d="M879 400.5H884" fill="none" stroke="#fff" stroke-width="1"/><path d="M488 419.5H495" fill="none" stroke="#fff" stroke-width="1"/><path d="M879 419.5H889" fill="none" stroke="#fff" stroke-width="1"/><path d="M491 439.5H495" fill="none" stroke="#fff" stroke-width="1"/><path d="M879 439.5H884" fill="none" stroke="#fff" stroke-width="1"/><path d="M488 458.5H495" fill="none" stroke="#fff" stroke-width="1"/><path d="M879 458.5H889" fill="none" stroke="#fff" stroke-width="1"/><path d="M533.5 458V466" fill="none" stroke="#fff" stroke-width="1"/><path d="M514.5 458V463" fill="none" stroke="#fff" stroke-width="1"/><path d="M571.5 458V466" fill="none" stroke="#fff" stroke-width="1"/><path d="M552.5 458V463" fill="none" stroke="#fff" stroke-width="1"/><path d="M610.5 458V466" fill="none" stroke="#fff" stroke-width="1"/><path d="M591.5 458V463" fill="none" stroke="#fff" stroke-width="1"/><path d="M648.5 458V466" fill="none" stroke="#fff" stroke-width="1"/><path d="M629.5 458V463" fill="none" stroke="#fff" stroke-width="1"/><path d="M687.5 458V466" fill="none" stroke="#fff" stroke-width="1"/><path d="M668.5 458V463" fill="none" stroke="#fff" stroke-width="1"/><path d="M725.5 458V466" fill="none" stroke="#fff" stroke-width="1"/><path d="M706.5 458V463" fill="none" stroke="#fff" stroke-width="1"/><path d="M764.5 458V466" fill="none" stroke="#fff" stroke-width="1"/><path d="M744.5 458V463" fill="none" stroke="#fff" stroke-width="1"/><path d="M802.5 458V466" fill="none" stroke="#fff" stroke-width="1"/><path d="M783.5 458V463" fill="none" stroke="#fff" stroke-width="1"/><path d="M841.5 458V466" fill="none" stroke="#fff" stroke-width="1"/><path d="M821.5 458V463" fill="none" stroke="#fff" stroke-width="1"/><path d="M860.5 458V463" fill="none" stroke="#fff" stroke-width="1"/><path d="M494.6 262.5H499.1V261.5H507.1V260.5H514.6V259.5H521.5V258.5H529.5V257.5H537.4V256.5H552.9V255.5H566.6V256.5H584.6V257.5H596V258.5H608.8V259.5H622.5V260.5H642.3V261.5H689V262.5H767.5V261.5H785.7V262.5H802.2V263.5H823.8V264.5H879V264.5" fill="none" stroke="#00ffff" stroke-width="1.2"/><path d="M495 264.5H505V263.5H527.2V262.5H541.3V261.5H554.5V260.5H566.6V259.5H578.9V258.5H596V257.5H609.3V256.5H632.7V255.5H665.8V254.5H709.8V253.5H766.4V252.5H879V252.5" fill="none" stroke="#00ff00" stroke-width="1.2"/></svg>
<div style="left:446px;top:69px;width:478px;height:429px;overflow:hidden">
<div class="t" style="top:calc(-69px + 70.00px);font-size:13px;line-height:15px;color:#fff;font-style:italic;left:-43.89999999999998px;transform-origin:0 0;transform:scaleX(1.167);">Projectile diameter= 10.25mm</div>
<div class="t" style="top:calc(-69px + 70.00px);font-size:13px;line-height:15px;color:#fff;font-style:italic;left:180px;transform-origin:0 0;transform:scaleX(1.160);">Projectile weight= 25.8g</div>
<div class="t" style="top:calc(-69px + 70.00px);font-size:13px;line-height:15px;color:#fff;font-style:italic;left:361.5px;transform-origin:0 0;transform:scaleX(1.175);">Starting position= -44mm</div>
<div class="t" style="top:calc(-69px + 104.00px);font-size:13px;line-height:15px;color:#00ffff;font-style:italic;left:19.19999999999999px;transform-origin:0 0;transform:scaleX(1.058);">240</div>
<div class="t" style="top:calc(-69px + 143.00px);font-size:13px;line-height:15px;color:#00ffff;font-style:italic;left:19.19999999999999px;transform-origin:0 0;transform:scaleX(1.058);">180</div>
<div class="t" style="top:calc(-69px + 182.00px);font-size:13px;line-height:15px;color:#00ffff;font-style:italic;left:19.19999999999999px;transform-origin:0 0;transform:scaleX(1.058);">120</div>
<div class="t" style="top:calc(-69px + 220.00px);font-size:13px;line-height:15px;color:#00ffff;font-style:italic;left:19.19999999999999px;transform-origin:0 0;transform:scaleX(1.058);">60</div>
<div class="t" style="top:calc(-69px + 260.00px);font-size:13px;line-height:15px;color:#00ffff;font-style:italic;left:19.19999999999999px;transform-origin:0 0;transform:scaleX(1.058);">0</div>
<div class="t" style="top:calc(-69px + 298.00px);font-size:13px;line-height:15px;color:#00ffff;font-style:italic;left:15.399999999999977px;transform-origin:0 0;transform:scaleX(1.102);">-60</div>
<div class="t" style="top:calc(-69px + 337.00px);font-size:13px;line-height:15px;color:#00ffff;font-style:italic;left:15.399999999999977px;transform-origin:0 0;transform:scaleX(1.090);">-120</div>
<div class="t" style="top:calc(-69px + 376.00px);font-size:13px;line-height:15px;color:#00ffff;font-style:italic;left:15.399999999999977px;transform-origin:0 0;transform:scaleX(1.090);">-180</div>
<div class="t" style="top:calc(-69px + 415.00px);font-size:13px;line-height:15px;color:#00ffff;font-style:italic;left:15.399999999999977px;transform-origin:0 0;transform:scaleX(1.090);">-240</div>
<div class="t" style="top:calc(-69px + 454.00px);font-size:13px;line-height:15px;color:#00ffff;font-style:italic;left:15.399999999999977px;transform-origin:0 0;transform:scaleX(1.090);">-300</div>
<div class="t" style="top:calc(-69px + 104.00px);font-size:13px;line-height:15px;color:#00ff00;font-style:italic;left:448.6px;transform-origin:0 0;transform:scaleX(1.058);">24</div>
<div class="t" style="top:calc(-69px + 143.00px);font-size:13px;line-height:15px;color:#00ff00;font-style:italic;left:448.6px;transform-origin:0 0;transform:scaleX(1.058);">18</div>
<div class="t" style="top:calc(-69px + 182.00px);font-size:13px;line-height:15px;color:#00ff00;font-style:italic;left:448.6px;transform-origin:0 0;transform:scaleX(1.058);">12</div>
<div class="t" style="top:calc(-69px + 220.00px);font-size:13px;line-height:15px;color:#00ff00;font-style:italic;left:448.6px;transform-origin:0 0;transform:scaleX(1.058);">6</div>
<div class="t" style="top:calc(-69px + 298.00px);font-size:13px;line-height:15px;color:#00ff00;font-style:italic;left:444px;transform-origin:0 0;transform:scaleX(1.129);">-6</div>
<div class="t" style="top:calc(-69px + 337.00px);font-size:13px;line-height:15px;color:#00ff00;font-style:italic;left:444px;transform-origin:0 0;transform:scaleX(1.102);">-12</div>
<div class="t" style="top:calc(-69px + 376.00px);font-size:13px;line-height:15px;color:#00ff00;font-style:italic;left:444px;transform-origin:0 0;transform:scaleX(1.102);">-18</div>
<div class="t" style="top:calc(-69px + 415.00px);font-size:13px;line-height:15px;color:#00ff00;font-style:italic;left:444px;transform-origin:0 0;transform:scaleX(1.102);">-24</div>
<div class="t" style="top:calc(-69px + 454.00px);font-size:13px;line-height:15px;color:#00ff00;font-style:italic;left:444px;transform-origin:0 0;transform:scaleX(1.102);">-30</div>
<div class="t" style="top:calc(-69px + 244.00px);font-size:13px;line-height:15px;color:#00ffff;font-style:italic;left:5px;transform-origin:0 0;transform:scaleX(1.100);">F</div>
<div class="t" style="top:calc(-69px + 260.00px);font-size:13px;line-height:15px;color:#00ffff;font-style:italic;left:5px;transform-origin:0 0;transform:scaleX(1.100);">O</div>
<div class="t" style="top:calc(-69px + 276.00px);font-size:13px;line-height:15px;color:#00ffff;font-style:italic;left:5px;transform-origin:0 0;transform:scaleX(1.100);">R</div>
<div class="t" style="top:calc(-69px + 292.00px);font-size:13px;line-height:15px;color:#00ffff;font-style:italic;left:5px;transform-origin:0 0;transform:scaleX(1.100);">C</div>
<div class="t" style="top:calc(-69px + 308.00px);font-size:13px;line-height:15px;color:#00ffff;font-style:italic;left:5px;transform-origin:0 0;transform:scaleX(1.100);">E</div>
<div class="t" style="top:calc(-69px + 355.00px);font-size:13px;line-height:15px;color:#00ffff;font-style:italic;left:2.1999999999999886px;transform-origin:0 0;transform:scaleX(1.120);">[N]</div>
<div class="t" style="top:calc(-69px + 286.00px);font-size:13px;line-height:15px;color:#00ff00;font-style:italic;left:467px;transform-origin:0 0;transform:scaleX(1.100);">S</div>
<div class="t" style="top:calc(-69px + 302.00px);font-size:13px;line-height:15px;color:#00ff00;font-style:italic;left:467px;transform-origin:0 0;transform:scaleX(1.100);">P</div>
<div class="t" style="top:calc(-69px + 318.00px);font-size:13px;line-height:15px;color:#00ff00;font-style:italic;left:467px;transform-origin:0 0;transform:scaleX(1.100);">E</div>
<div class="t" style="top:calc(-69px + 334.00px);font-size:13px;line-height:15px;color:#00ff00;font-style:italic;left:467px;transform-origin:0 0;transform:scaleX(1.100);">E</div>
<div class="t" style="top:calc(-69px + 350.00px);font-size:13px;line-height:15px;color:#00ff00;font-style:italic;left:467px;transform-origin:0 0;transform:scaleX(1.100);">D</div>
<div class="t" style="top:calc(-69px + 398.00px);font-size:13px;line-height:15px;color:#00ff00;font-style:italic;left:463px;transform-origin:0 0;transform:scaleX(1.100);">[m/s]</div>
<div class="t" style="top:calc(-69px + 468.00px);font-size:13px;line-height:15px;color:#fff;font-style:italic;left:75.70000000000005px;transform-origin:0 0;transform:scaleX(1.096);">1000</div>
<div class="t" style="top:calc(-69px + 468.00px);font-size:13px;line-height:15px;color:#fff;font-style:italic;left:114.5px;transform-origin:0 0;transform:scaleX(1.096);">2000</div>
<div class="t" style="top:calc(-69px + 468.00px);font-size:13px;line-height:15px;color:#fff;font-style:italic;left:153.29999999999995px;transform-origin:0 0;transform:scaleX(1.096);">3000</div>
<div class="t" style="top:calc(-69px + 468.00px);font-size:13px;line-height:15px;color:#fff;font-style:italic;left:192.0px;transform-origin:0 0;transform:scaleX(1.096);">4000</div>
<div class="t" style="top:calc(-69px + 468.00px);font-size:13px;line-height:15px;color:#fff;font-style:italic;left:230.79999999999995px;transform-origin:0 0;transform:scaleX(1.096);">5000</div>
<div class="t" style="top:calc(-69px + 468.00px);font-size:13px;line-height:15px;color:#fff;font-style:italic;left:269.6px;transform-origin:0 0;transform:scaleX(1.096);">6000</div>
<div class="t" style="top:calc(-69px + 468.00px);font-size:13px;line-height:15px;color:#fff;font-style:italic;left:308.4px;transform-origin:0 0;transform:scaleX(1.096);">7000</div>
<div class="t" style="top:calc(-69px + 468.00px);font-size:13px;line-height:15px;color:#fff;font-style:italic;left:347.20000000000005px;transform-origin:0 0;transform:scaleX(1.096);">8000</div>
<div class="t" style="top:calc(-69px + 468.00px);font-size:13px;line-height:15px;color:#fff;font-style:italic;left:385.9px;transform-origin:0 0;transform:scaleX(1.096);">9000</div>
<div class="t" style="top:calc(-69px + 468.00px);font-size:13px;line-height:15px;color:#fff;font-style:italic;left:425.20000000000005px;transform-origin:0 0;transform:scaleX(1.084);">10000</div>
<div class="t" style="top:calc(-69px + 482.00px);font-size:13px;line-height:15px;color:#fff;font-style:italic;left:226.5px;transform-origin:0 0;transform:scaleX(1.200);">Time [us]</div>
<div class="t" style="top:calc(-69px + 351.00px);font-size:13px;line-height:15px;color:#00ffff;font-style:italic;left:265.29999999999995px;transform-origin:0 0;transform:scaleX(1.137);">Peak force= 12.7 N</div>
<div class="t" style="top:calc(-69px + 367.00px);font-size:13px;line-height:15px;color:#ff0000;font-style:italic;left:265.29999999999995px;transform-origin:0 0;transform:scaleX(1.141);">Peak speed= 1.86 m/s</div>
<div class="t" style="top:calc(-69px + 383.00px);font-size:13px;line-height:15px;color:#0000ff;font-style:italic;left:265.29999999999995px;transform-origin:0 0;transform:scaleX(1.125);">Peak inductance= 35734.34 uH</div>
<div class="t" style="top:calc(-69px + 399.00px);font-size:13px;line-height:15px;color:#00ffff;font-style:italic;left:265.29999999999995px;transform-origin:0 0;transform:scaleX(1.154);">Exit kinetic energy= .04 Joules</div>
<div class="t" style="top:calc(-69px + 415.00px);font-size:13px;line-height:15px;color:#00ff00;font-style:italic;left:265.29999999999995px;transform-origin:0 0;transform:scaleX(1.166);">Exit speed= 1.86 m/s</div>
<div class="t" style="top:calc(-69px + 431.00px);font-size:13px;line-height:15px;color:#00ffff;font-style:italic;left:265.29999999999995px;transform-origin:0 0;transform:scaleX(1.155);">Energy consumption= 72.67 Joules</div>
<div class="t" style="top:calc(-69px + 447.00px);font-size:13px;line-height:15px;color:#ff00ff;font-style:italic;left:265.29999999999995px;transform-origin:0 0;transform:scaleX(1.169);">Efficiency= .06 %</div>
</div>
<div style="left:436px;top:497px;width:489px;height:170px;overflow:hidden">
<div class="g" style="left:16px;top:9px;width:472px;height:200px;"></div>
<div style="left:23px;top:2px;width:63px;height:15px;background:#f0f0f0"></div>
<div class="t" style="top:calc(-497px + 500.00px);font-size:13.33px;line-height:15px;color:#000;font-weight:bold;font-style:italic;left:25.8px;transform-origin:0 0;transform:scaleX(1.084);">Settings</div>
<div class="t" style="top:calc(-497px + 522.00px);font-size:12px;line-height:14px;color:#000;left:24.2px;transform-origin:0 0;transform:scaleX(0.865);">Projectile diameter</div>
<div class="t" style="top:calc(-497px + 522.00px);font-size:12px;line-height:14px;color:#000;left:120.5px;transform-origin:0 0;transform:scaleX(0.873);">Projectile lenght</div>
<div class="t" style="top:calc(-497px + 522.00px);font-size:12px;line-height:14px;color:#000;left:216.9px;transform-origin:0 0;transform:scaleX(0.874);">Projectile weight</div>
<div class="t" style="top:calc(-497px + 522.00px);font-size:12px;line-height:14px;color:#000;left:304.7px;transform-origin:0 0;transform:scaleX(0.861);">Starting position</div>
<div class="t" style="top:calc(-497px + 522.00px);font-size:12px;line-height:14px;color:#000;left:400.8px;transform-origin:0 0;transform:scaleX(0.864);">Starting speed</div>
<div class="f" style="left:24px;top:41px;width:49px;height:18px;"></div>
<div class="t" style="top:calc(-497px + 541.00px);font-size:12px;line-height:14px;color:#000;right:418.5px;transform-origin:100% 0;transform:scaleX(0.870);">10.25</div>
<div class="t" style="top:calc(-497px + 538.00px);font-size:12px;line-height:14px;color:#000;left:80px;transform-origin:0 0;transform:scaleX(0.800);">mm</div>
<div class="f" style="left:121px;top:41px;width:49px;height:18px;"></div>
<div class="t" style="top:calc(-497px + 541.00px);font-size:12px;line-height:14px;color:#000;right:321.5px;transform-origin:100% 0;transform:scaleX(0.870);">39</div>
<div class="t" style="top:calc(-497px + 538.00px);font-size:12px;line-height:14px;color:#000;left:176.4px;transform-origin:0 0;transform:scaleX(0.800);">mm</div>
<div class="f" style="left:224px;top:41px;width:40px;height:18px;"></div>
<div class="t" style="top:calc(-497px + 541.00px);font-size:12px;line-height:14px;color:#000;right:227.5px;transform-origin:100% 0;transform:scaleX(0.870);">25.8</div>
<div class="t" style="top:calc(-497px + 538.00px);font-size:12px;line-height:14px;color:#000;left:271.7px;transform-origin:0 0;transform:scaleX(0.870);">g</div>
<div class="f" style="left:304px;top:41px;width:49px;height:18px;"></div>
<div class="t" style="top:calc(-497px + 541.00px);font-size:12px;line-height:14px;color:#000;right:138.5px;transform-origin:100% 0;transform:scaleX(0.870);">-44</div>
<div class="t" style="top:calc(-497px + 538.00px);font-size:12px;line-height:14px;color:#000;left:360.9px;transform-origin:0 0;transform:scaleX(0.800);">mm</div>
<div class="f" style="left:400px;top:41px;width:49px;height:18px;"></div>
<div class="t" style="top:calc(-497px + 541.00px);font-size:12px;line-height:14px;color:#000;right:42.5px;transform-origin:100% 0;transform:scaleX(0.870);">0</div>
<div class="t" style="top:calc(-497px + 538.00px);font-size:12px;line-height:14px;color:#000;left:456.9px;transform-origin:0 0;transform:scaleX(0.895);">m/s</div>
<div class="t" style="top:calc(-497px + 562.00px);font-size:12px;line-height:14px;color:#000;left:24.2px;transform-origin:0 0;transform:scaleX(0.879);">Saturation Magn.</div>
<div class="t" style="top:calc(-497px + 562.00px);font-size:12px;line-height:14px;color:#000;left:120.5px;transform-origin:0 0;transform:scaleX(0.856);">Initial Susc.</div>
<div class="t" style="top:calc(-497px + 562.00px);font-size:12px;line-height:14px;color:#000;left:208.8px;transform-origin:0 0;transform:scaleX(0.880);">FZI factor</div>
<div class="t" style="top:calc(-497px + 562.00px);font-size:12px;line-height:14px;color:#000;left:288.6px;transform-origin:0 0;transform:scaleX(0.834);">Cross-point</div>
<div class="t" style="top:calc(-497px + 562.00px);font-size:12px;line-height:14px;color:#000;left:376.5px;transform-origin:0 0;transform:scaleX(0.898);">Static friction coeff</div>
<div class="f" style="left:24px;top:81px;width:40px;height:18px;"></div>
<div class="t" style="top:calc(-497px + 581.00px);font-size:12px;line-height:14px;color:#8a8a8a;right:427.5px;transform-origin:100% 0;transform:scaleX(0.870);">2.15</div>
<div class="t" style="top:calc(-497px + 578.00px);font-size:12px;line-height:14px;color:#000;left:73px;transform-origin:0 0;transform:scaleX(0.892);">Tesla</div>
<div class="f" style="left:128px;top:81px;width:48px;height:18px;"></div>
<div class="t" style="top:calc(-497px + 581.00px);font-size:12px;line-height:14px;color:#8a8a8a;right:315.5px;transform-origin:100% 0;transform:scaleX(0.870);">6000</div>
<div class="f" style="left:209px;top:81px;width:55px;height:18px;"></div>
<div class="t" style="top:calc(-497px + 581.00px);font-size:12px;line-height:14px;color:#000;right:227.5px;transform-origin:100% 0;transform:scaleX(0.870);">0.5</div>
<div class="f" style="left:288px;top:81px;width:49px;height:18px;"></div>
<div class="t" style="top:calc(-497px + 581.00px);font-size:12px;line-height:14px;color:#000;left:291.5px;transform-origin:0 0;transform:scaleX(0.870);">1000</div>
<div class="t" style="top:calc(-497px + 578.00px);font-size:12px;line-height:14px;color:#000;left:344.6px;transform-origin:0 0;transform:scaleX(0.800);">mm</div>
<div class="f" style="left:384px;top:81px;width:49px;height:18px;"></div>
<div class="t" style="top:calc(-497px + 581.00px);font-size:12px;line-height:14px;color:#000;left:387.5px;transform-origin:0 0;transform:scaleX(0.870);">5.6</div>
<div class="t" style="top:calc(-497px + 578.00px);font-size:12px;line-height:14px;color:#000;left:440.7px;transform-origin:0 0;transform:scaleX(0.933);">m/s^2</div>
<div class="t" style="top:calc(-497px + 602.00px);font-size:12px;line-height:14px;color:#000;left:24.2px;transform-origin:0 0;transform:scaleX(0.865);">Max Force</div>
<div class="t" style="top:calc(-497px + 602.00px);font-size:12px;line-height:14px;color:#000;left:112.4px;transform-origin:0 0;transform:scaleX(0.874);">Min Force</div>
<div class="t" style="top:calc(-497px + 602.00px);font-size:12px;line-height:14px;color:#000;left:200.7px;transform-origin:0 0;transform:scaleX(0.874);">Max speed</div>
<div class="t" style="top:calc(-497px + 602.00px);font-size:12px;line-height:14px;color:#000;left:296.6px;transform-origin:0 0;transform:scaleX(0.876);">Min speed</div>
<div class="t" style="top:calc(-497px + 602.00px);font-size:12px;line-height:14px;color:#000;left:392.8px;transform-origin:0 0;transform:scaleX(0.858);">Norm. Constant</div>
<div class="f" style="left:24px;top:121px;width:48px;height:18px;"></div>
<div class="t" style="top:calc(-497px + 621.00px);font-size:12px;line-height:14px;color:#000;left:27.5px;transform-origin:0 0;transform:scaleX(0.870);">300</div>
<div class="t" style="top:calc(-497px + 618.00px);font-size:12px;line-height:14px;color:#000;left:80.2px;transform-origin:0 0;transform:scaleX(0.870);">N</div>
<div class="f" style="left:112px;top:121px;width:48px;height:18px;"></div>
<div class="t" style="top:calc(-497px + 621.00px);font-size:12px;line-height:14px;color:#8a8a8a;left:115.5px;transform-origin:0 0;transform:scaleX(0.870);">-300</div>
<div class="t" style="top:calc(-497px + 618.00px);font-size:12px;line-height:14px;color:#000;left:169px;transform-origin:0 0;transform:scaleX(0.870);">N</div>
<div class="f" style="left:200px;top:121px;width:48px;height:18px;"></div>
<div class="t" style="top:calc(-497px + 621.00px);font-size:12px;line-height:14px;color:#000;left:203.5px;transform-origin:0 0;transform:scaleX(0.870);">30</div>
<div class="t" style="top:calc(-497px + 618.00px);font-size:12px;line-height:14px;color:#000;left:256.5px;transform-origin:0 0;transform:scaleX(0.910);">m/s</div>
<div class="f" style="left:296px;top:121px;width:49px;height:18px;"></div>
<div class="t" style="top:calc(-497px + 621.00px);font-size:12px;line-height:14px;color:#8a8a8a;left:299.5px;transform-origin:0 0;transform:scaleX(0.870);">-30</div>
<div class="t" style="top:calc(-497px + 618.00px);font-size:12px;line-height:14px;color:#000;left:352.9px;transform-origin:0 0;transform:scaleX(0.900);">m/s</div>
<div class="f" style="left:400px;top:121px;width:64px;height:18px;"></div>
<div class="t" style="top:calc(-497px + 621.00px);font-size:12px;line-height:14px;color:#000;left:403.5px;transform-origin:0 0;transform:scaleX(0.870);">1</div>
<div class="t" style="top:calc(-497px + 643.00px);font-size:14.67px;line-height:16px;color:#000;font-weight:bold;font-style:italic;left:24.6px;transform-origin:0 0;transform:scaleX(1.051);">Projectile</div>
<div class="t" style="top:calc(-497px + 660.00px);font-size:14.67px;line-height:16px;color:#000;font-weight:bold;font-style:italic;left:24.6px;transform-origin:0 0;transform:scaleX(1.081);">Magnetization Model</div>
<div class="r" style="left:193px;top:153px;width:12px;height:12px;"></div>
<div class="t" style="top:calc(-497px + 650.00px);font-size:12px;line-height:14px;color:#000;left:210.2px;transform-origin:0 0;transform:scaleX(0.843);">Polynomial</div>
<div class="r" style="left:272.6px;top:153px;width:12px;height:12px;"></div>
<div class="t" style="top:calc(-497px + 650.00px);font-size:12px;line-height:14px;color:#000;left:290.5px;transform-origin:0 0;transform:scaleX(0.882);">Hyperbolic tangent</div>
<div class="r on" style="left:392.5px;top:151px;width:12px;height:12px;"></div>
<div class="t" style="top:calc(-497px + 640.00px);font-size:12px;line-height:14px;color:#000;left:410.2px;transform-origin:0 0;transform:scaleX(0.846);">Custom B-H</div>
<div class="t" style="top:calc(-497px + 653.00px);font-size:12px;line-height:14px;color:#000;left:410.2px;transform-origin:0 0;transform:scaleX(0.852);">curve</div>
</div>
<svg class="a" style="left:780px;top:698px" width="60" height="90" viewBox="0 0 60 90"><g fill="#f3c6c2" stroke="#fff" stroke-width="2.6" paint-order="stroke" style="filter:drop-shadow(0 0.5px 1.3px rgba(0,0,0,.5))"><path d="M33.5 4.5L36.0 4.5V23.8H46.0Q50.3 23.8 50.3 28.0V38.0H43.5Q40.8 38.0 40.8 40.7V46.0Q40.8 48.7 43.5 48.7H50.3V61.0Q50.3 65.4 46.0 65.4H36.0V71.5L26.0 82.0H23.5V65.4H14.5Q8.0 65.4 8.0 59.0V30.2Q8.0 23.8 14.5 23.8H23.5V14.8ZM23.5 35.0H20.8Q18.2 35.0 18.2 37.6V52.1Q18.2 54.7 20.8 54.7H23.5Z" fill-rule="evenodd"/></g></svg>
<svg class="a" style="left:826px;top:706px" width="135" height="52"><g style="filter:drop-shadow(0 1px 1.2px rgba(0,0,0,.5))"><text class="s" transform="translate(11,39.5) skewX(-12) scale(0.83,1)" font-size="33.5" fill="#d2d2d2" stroke="#fff" stroke-width="1.5" paint-order="stroke">科创论坛</text></g></svg>
<div class="t" style="top:749.00px;font-size:17px;line-height:19px;color:#c9c9c9;font-weight:bold;font-style:italic;left:838px;transform-origin:0 0;transform:scaleX(0.960);text-shadow:0 0 1px #fff,0 0 1px #fff,0 1px 2px rgba(0,0,0,.55),-1px 0 0 #fff,1px 0 0 #fff;">kechuang.org</div>
<div style="left:70px;top:70px;width:310px;height:740px;border-radius:7px 7px 0 0;border:1px solid #2e343c;background:linear-gradient(90deg,#c6daef 0,#bbd3ec 18%,#b4cfea 30%,#c3d9f0 42%,#b9d3ed 55%,#c6dbf1 68%,#bcd4ed 82%,#c8dcf1 100%);box-shadow:inset 0 0 0 1px rgba(255,255,255,.6)"></div>
<div style="left:71px;top:71px;width:308px;height:28px;border-radius:6px 6px 0 0;background:linear-gradient(180deg,rgba(255,255,255,.5) 0,rgba(255,255,255,.22) 12%,rgba(255,255,255,.08) 45%,rgba(190,208,230,.0) 60%,rgba(255,255,255,.12) 100%)"></div>
<div style="left:90px;top:73px;width:130px;height:24px;background:linear-gradient(115deg,rgba(255,255,255,0) 0,rgba(255,255,255,.3) 30%,rgba(255,255,255,0) 45%,rgba(255,255,255,.25) 70%,rgba(255,255,255,0) 100%)"></div>
<div style="left:71px;top:71px;width:308px;height:28px;overflow:hidden;border-radius:6px 6px 0 0">
<div style="left:137px;top:1px;width:22px;height:11px;background:rgba(140,160,185,.55);filter:blur(3px)"></div>
<div style="left:205px;top:11px;width:32px;height:12px;background:rgba(150,172,200,.5);filter:blur(3.5px)"></div>
</div>
<div style="left:71px;top:100px;width:6px;height:710px;background:linear-gradient(180deg,#d3e4f6 0,#c7dcf2 60px,#c2d8f0 68px,#c5d9ee 483px,#c5dcf4 500px,#b9d3ef 565px,#7b8692 574px,#6c727a 100%)"></div>
<div style="left:72px;top:100px;width:2px;height:710px;background:linear-gradient(180deg,#f2f8fe 0,#eaf3fc 100%)"></div>
<div style="left:372px;top:100px;width:7px;height:710px;background:linear-gradient(180deg,#d3e4f6 0,#c7dcf2 60px,#c2d8f0 483px,#c1daf5 500px,#b7d3f1 100%)"></div>
<div style="left:374px;top:100px;width:3px;height:710px;background:linear-gradient(180deg,#f6fafe 0,#eef6fe 100%)"></div>
<div style="left:378px;top:100px;width:1px;height:710px;background:#e8f1fa"></div>
<div style="left:70px;top:169px;width:8px;height:413px;background:#0c0e14"></div>
<div style="left:71px;top:169px;width:1px;height:413px;background:linear-gradient(180deg,#dceaf6 0,#b4bac0 30px,#a8aeb4 100%)"></div>
<div style="left:72px;top:169px;width:4px;height:413px;background:linear-gradient(180deg,#cfe2f2 0,#8b949e 14px,#5c6168 34px,#2a2d34 70px,#0c0e14 105px,#0a0c12 380px,#22252b 405px,#5a6068 414px)"></div>
<div style="left:76px;top:169px;width:1px;height:413px;background:linear-gradient(180deg,#c8d4de 0,#909498 30px,#888 100%)"></div>
<div style="left:372px;top:169px;width:8px;height:413px;background:#0c0e14"></div>
<div style="left:373px;top:169px;width:1px;height:413px;background:#e4e8ec"></div>
<div style="left:374px;top:169px;width:4px;height:413px;background:linear-gradient(180deg,#cfe2f2 0,#8b949e 14px,#5c6168 34px,#2a2d34 70px,#0c0e14 105px,#0a0c12 380px,#22252b 405px,#5a6068 414px)"></div>
<div style="left:378px;top:169px;width:1px;height:413px;background:linear-gradient(180deg,#e8f0f8 0,#c8ccd0 30px,#c4c4c4 100%)"></div>
<div style="left:77px;top:99px;width:296px;height:720px;background:#f0f0f0;border:1px solid #5d646e;box-shadow:inset 1px 1px 0 #fbfbfb"></div>
<svg class="a" style="left:80px;top:80px" width="14" height="12" shape-rendering="crispEdges"><path d="M0 0h3v1h4v1h3v9h-3v-1h-4v-1h-3z" fill="#000"/><path d="M1 3h2v1h4v1h2v5h-2v-1h-4v-1h-2z" fill="#fff"/><path d="M1 1h2v1h-2zM3 2h4v1h-4zM7 3h2v1h-2z" fill="#00e4e4"/><path d="M10 7h1v1h1v1h1v1h-2v-1h-1z" fill="#8a8f98" opacity=".8"/></svg>
<div class="t" style="top:78.00px;font-size:12.5px;line-height:14px;color:#000;left:99.8px;transform-origin:0 0;transform:scaleX(1.011);text-shadow:0 0 4px #fff,0 0 6px #fff;">Custom B-H Curve</div>
<div style="left:326px;top:71px;width:47px;height:19px;border:1px solid #46262a;border-top:none;border-radius:0 0 4.5px 4.5px;background:linear-gradient(180deg,#e9b1a4 0,#d98a7a 45%,#c4402c 50%,#c9513b 75%,#dc8c6a 100%);box-shadow:inset 0 0 0 1px rgba(255,255,255,.45)"></div>
<svg class="a" style="left:343px;top:73.6px" width="16" height="14"><path d="M3.2 2.5l8.2 7.2M11.4 2.5l-8.2 7.2" stroke="#3d4860" stroke-width="4.9"/><path d="M3.2 2.5l8.2 7.2M11.4 2.5l-8.2 7.2" stroke="#fff" stroke-width="2.8"/></svg>
<div class="g" style="left:86px;top:114px;width:128px;height:642px;"></div>
<div style="left:93px;top:107px;width:68px;height:14px;background:#f0f0f0"></div>
<div class="t" style="top:108.00px;font-size:12px;line-height:14px;color:#000;left:95.6px;transform-origin:0 0;transform:scaleX(0.883);">H field  (A/m)</div>
<div class="g" style="left:222px;top:114px;width:136px;height:642px;"></div>
<div style="left:229px;top:107px;width:109px;height:14px;background:#f0f0f0"></div>
<div class="t" style="top:108.00px;font-size:12px;line-height:14px;color:#000;left:231.3px;transform-origin:0 0;transform:scaleX(0.892);">Induction (Field Tesla)</div>
<div class="f" style="left:94px;top:124px;width:113px;height:17px;"></div>
<div class="t" style="top:127.00px;font-size:12px;line-height:14px;color:#000;left:97.0px;transform-origin:0 0;transform:scaleX(0.895);">0.0000</div>
<div class="f" style="left:230px;top:124px;width:120px;height:17px;"></div>
<div class="t" style="top:127.00px;font-size:12px;line-height:14px;color:#000;left:233.0px;transform-origin:0 0;transform:scaleX(0.895);">0.5</div>
<div class="f" style="left:94px;top:140px;width:113px;height:17px;"></div>
<div class="t" style="top:143.00px;font-size:12px;line-height:14px;color:#000;left:97.0px;transform-origin:0 0;transform:scaleX(0.895);">800</div>
<div class="f" style="left:230px;top:140px;width:120px;height:17px;"></div>
<div class="t" style="top:143.00px;font-size:12px;line-height:14px;color:#000;left:233.0px;transform-origin:0 0;transform:scaleX(0.895);">1.3</div>
<div class="f" style="left:94px;top:156px;width:113px;height:17px;"></div>
<div class="t" style="top:159.00px;font-size:12px;line-height:14px;color:#000;left:97.0px;transform-origin:0 0;transform:scaleX(0.895);">4000</div>
<div class="f" style="left:230px;top:156px;width:120px;height:17px;"></div>
<div class="t" style="top:159.00px;font-size:12px;line-height:14px;color:#000;left:233.0px;transform-origin:0 0;transform:scaleX(0.895);">1.8</div>
<div class="f" style="left:94px;top:172px;width:113px;height:17px;"></div>
<div class="t" style="top:175.00px;font-size:12px;line-height:14px;color:#000;left:97.0px;transform-origin:0 0;transform:scaleX(0.895);">10000</div>
<div class="f" style="left:230px;top:172px;width:120px;height:17px;"></div>
<div class="t" style="top:175.00px;font-size:12px;line-height:14px;color:#000;left:233.0px;transform-origin:0 0;transform:scaleX(0.895);">1.9</div>
<div class="f" style="left:94px;top:188px;width:113px;height:17px;"></div>
<div class="t" style="top:191.00px;font-size:12px;line-height:14px;color:#000;left:97.0px;transform-origin:0 0;transform:scaleX(0.895);">16000</div>
<div class="f" style="left:230px;top:188px;width:120px;height:17px;"></div>
<div class="t" style="top:191.00px;font-size:12px;line-height:14px;color:#000;left:233.0px;transform-origin:0 0;transform:scaleX(0.895);">2</div>
<div class="f" style="left:94px;top:204px;width:113px;height:17px;"></div>
<div class="t" style="top:207.00px;font-size:12px;line-height:14px;color:#000;left:97.0px;transform-origin:0 0;transform:scaleX(0.895);">16000000</div>
<div class="f" style="left:230px;top:204px;width:120px;height:17px;"></div>
<div class="t" style="top:207.00px;font-size:12px;line-height:14px;color:#000;left:233.0px;transform-origin:0 0;transform:scaleX(0.895);">2.15</div>
<div class="f" style="left:94px;top:220px;width:113px;height:17px;"></div>
<div class="t" style="top:223.00px;font-size:12px;line-height:14px;color:#000;left:97.0px;transform-origin:0 0;transform:scaleX(0.895);">20000000</div>
<div class="f" style="left:230px;top:220px;width:120px;height:17px;"></div>
<div class="t" style="top:223.00px;font-size:12px;line-height:14px;color:#000;left:233.0px;transform-origin:0 0;transform:scaleX(0.895);">2.16</div>
<div class="f" style="left:94px;top:236px;width:113px;height:17px;"></div>
<div class="t" style="top:239.00px;font-size:12px;line-height:14px;color:#000;left:97.0px;transform-origin:0 0;transform:scaleX(0.895);">30000000</div>
<div class="f" style="left:230px;top:236px;width:120px;height:17px;"></div>
<div class="t" style="top:239.00px;font-size:12px;line-height:14px;color:#000;left:233.0px;transform-origin:0 0;transform:scaleX(0.895);">2.17</div>
<div class="f" style="left:94px;top:252px;width:113px;height:17px;"></div>
<div class="t" style="top:255.00px;font-size:12px;line-height:14px;color:#000;left:97.0px;transform-origin:0 0;transform:scaleX(0.895);">50000000</div>
<div class="f" style="left:230px;top:252px;width:120px;height:17px;"></div>
<div class="t" style="top:255.00px;font-size:12px;line-height:14px;color:#000;left:233.0px;transform-origin:0 0;transform:scaleX(0.895);">2.2</div>
<div class="f" style="left:94px;top:268px;width:113px;height:17px;"></div>
<div class="t" style="top:271.00px;font-size:12px;line-height:14px;color:#000;left:97.0px;transform-origin:0 0;transform:scaleX(0.895);">0.0000</div>
<div class="f" style="left:230px;top:268px;width:120px;height:17px;"></div>
<div class="t" style="top:271.00px;font-size:12px;line-height:14px;color:#000;left:233.0px;transform-origin:0 0;transform:scaleX(0.895);">0</div>
<div class="f" style="left:94px;top:284px;width:113px;height:17px;"></div>
<div class="t" style="top:287.00px;font-size:12px;line-height:14px;color:#000;left:97.0px;transform-origin:0 0;transform:scaleX(0.895);">0.0000</div>
<div class="f" style="left:230px;top:284px;width:120px;height:17px;"></div>
<div class="t" style="top:287.00px;font-size:12px;line-height:14px;color:#000;left:233.0px;transform-origin:0 0;transform:scaleX(0.895);">0</div>
<div class="f" style="left:94px;top:300px;width:113px;height:17px;"></div>
<div class="t" style="top:303.00px;font-size:12px;line-height:14px;color:#000;left:97.0px;transform-origin:0 0;transform:scaleX(0.895);">0.0000</div>
<div class="f" style="left:230px;top:300px;width:120px;height:17px;"></div>
<div class="t" style="top:303.00px;font-size:12px;line-height:14px;color:#000;left:233.0px;transform-origin:0 0;transform:scaleX(0.895);">0</div>
<div class="f" style="left:94px;top:316px;width:113px;height:17px;"></div>
<div class="t" style="top:319.00px;font-size:12px;line-height:14px;color:#000;left:97.0px;transform-origin:0 0;transform:scaleX(0.895);">0.0000</div>
<div class="f" style="left:230px;top:316px;width:120px;height:17px;"></div>
<div class="t" style="top:319.00px;font-size:12px;line-height:14px;color:#000;left:233.0px;transform-origin:0 0;transform:scaleX(0.895);">0</div>
<div class="f" style="left:94px;top:332px;width:113px;height:17px;"></div>
<div class="t" style="top:335.00px;font-size:12px;line-height:14px;color:#000;left:97.0px;transform-origin:0 0;transform:scaleX(0.895);">0.0000</div>
<div class="f" style="left:230px;top:332px;width:120px;height:17px;"></div>
<div class="t" style="top:335.00px;font-size:12px;line-height:14px;color:#000;left:233.0px;transform-origin:0 0;transform:scaleX(0.895);">0</div>
<div class="f" style="left:94px;top:348px;width:113px;height:17px;"></div>
<div class="t" style="top:351.00px;font-size:12px;line-height:14px;color:#000;left:97.0px;transform-origin:0 0;transform:scaleX(0.895);">0.0000</div>
<div class="f" style="left:230px;top:348px;width:120px;height:17px;"></div>
<div class="t" style="top:351.00px;font-size:12px;line-height:14px;color:#000;left:233.0px;transform-origin:0 0;transform:scaleX(0.895);">0</div>
<div class="f" style="left:94px;top:364px;width:113px;height:17px;"></div>
<div class="t" style="top:367.00px;font-size:12px;line-height:14px;color:#000;left:97.0px;transform-origin:0 0;transform:scaleX(0.895);">0.0000</div>
<div class="f" style="left:230px;top:364px;width:120px;height:17px;"></div>
<div class="t" style="top:367.00px;font-size:12px;line-height:14px;color:#000;left:233.0px;transform-origin:0 0;transform:scaleX(0.895);">0</div>
<div class="f" style="left:94px;top:380px;width:113px;height:17px;"></div>
<div class="t" style="top:383.00px;font-size:12px;line-height:14px;color:#000;left:97.0px;transform-origin:0 0;transform:scaleX(0.895);">0.0000</div>
<div class="f" style="left:230px;top:380px;width:120px;height:17px;"></div>
<div class="t" style="top:383.00px;font-size:12px;line-height:14px;color:#000;left:233.0px;transform-origin:0 0;transform:scaleX(0.895);">0</div>
<div class="f" style="left:94px;top:396px;width:113px;height:17px;"></div>
<div class="t" style="top:399.00px;font-size:12px;line-height:14px;color:#000;left:97.0px;transform-origin:0 0;transform:scaleX(0.895);">0.0000</div>
<div class="f" style="left:230px;top:396px;width:120px;height:17px;"></div>
<div class="t" style="top:399.00px;font-size:12px;line-height:14px;color:#000;left:233.0px;transform-origin:0 0;transform:scaleX(0.895);">0</div>
<div class="f" style="left:94px;top:412px;width:113px;height:17px;"></div>
<div class="t" style="top:415.00px;font-size:12px;line-height:14px;color:#000;left:97.0px;transform-origin:0 0;transform:scaleX(0.895);">0.0000</div>
<div class="f" style="left:230px;top:412px;width:120px;height:17px;"></div>
<div class="t" style="top:415.00px;font-size:12px;line-height:14px;color:#000;left:233.0px;transform-origin:0 0;transform:scaleX(0.895);">0</div>
<div class="f" style="left:94px;top:428px;width:113px;height:17px;"></div>
<div class="t" style="top:431.00px;font-size:12px;line-height:14px;color:#000;left:97.0px;transform-origin:0 0;transform:scaleX(0.895);">0.0000</div>
<div class="f" style="left:230px;top:428px;width:120px;height:17px;"></div>
<div class="t" style="top:431.00px;font-size:12px;line-height:14px;color:#000;left:233.0px;transform-origin:0 0;transform:scaleX(0.895);">0</div>
<div class="f" style="left:94px;top:444px;width:113px;height:17px;"></div>
<div class="t" style="top:447.00px;font-size:12px;line-height:14px;color:#000;left:97.0px;transform-origin:0 0;transform:scaleX(0.895);">0.0000</div>
<div class="f" style="left:230px;top:444px;width:120px;height:17px;"></div>
<div class="t" style="top:447.00px;font-size:12px;line-height:14px;color:#000;left:233.0px;transform-origin:0 0;transform:scaleX(0.895);">0</div>
<div class="f" style="left:94px;top:460px;width:113px;height:17px;"></div>
<div class="t" style="top:463.00px;font-size:12px;line-height:14px;color:#000;left:97.0px;transform-origin:0 0;transform:scaleX(0.895);">0.0000</div>
<div class="f" style="left:230px;top:460px;width:120px;height:17px;"></div>
<div class="t" style="top:463.00px;font-size:12px;line-height:14px;color:#000;left:233.0px;transform-origin:0 0;transform:scaleX(0.895);">0</div>
<div class="f" style="left:94px;top:476px;width:113px;height:17px;"></div>
<div class="t" style="top:479.00px;font-size:12px;line-height:14px;color:#000;left:97.0px;transform-origin:0 0;transform:scaleX(0.895);">0.0000</div>
<div class="f" style="left:230px;top:476px;width:120px;height:17px;"></div>
<div class="t" style="top:479.00px;font-size:12px;line-height:14px;color:#000;left:233.0px;transform-origin:0 0;transform:scaleX(0.895);">0</div>
<div class="f" style="left:94px;top:492px;width:113px;height:17px;"></div>
<div class="t" style="top:495.00px;font-size:12px;line-height:14px;color:#000;left:97.0px;transform-origin:0 0;transform:scaleX(0.895);">0.0000</div>
<div class="f" style="left:230px;top:492px;width:120px;height:17px;"></div>
<div class="t" style="top:495.00px;font-size:12px;line-height:14px;color:#000;left:233.0px;transform-origin:0 0;transform:scaleX(0.895);">0</div>
<div class="f" style="left:94px;top:508px;width:113px;height:17px;"></div>
<div class="t" style="top:511.00px;font-size:12px;line-height:14px;color:#000;left:97.0px;transform-origin:0 0;transform:scaleX(0.895);">0.0000</div>
<div class="f" style="left:230px;top:508px;width:120px;height:17px;"></div>
<div class="t" style="top:511.00px;font-size:12px;line-height:14px;color:#000;left:233.0px;transform-origin:0 0;transform:scaleX(0.895);">0</div>
<div class="f" style="left:94px;top:524px;width:113px;height:17px;"></div>
<div class="t" style="top:527.00px;font-size:12px;line-height:14px;color:#000;left:97.0px;transform-origin:0 0;transform:scaleX(0.895);">0.0000</div>
<div class="f" style="left:230px;top:524px;width:120px;height:17px;"></div>
<div class="t" style="top:527.00px;font-size:12px;line-height:14px;color:#000;left:233.0px;transform-origin:0 0;transform:scaleX(0.895);">0</div>
<div class="f" style="left:94px;top:540px;width:113px;height:17px;"></div>
<div class="t" style="top:543.00px;font-size:12px;line-height:14px;color:#000;left:97.0px;transform-origin:0 0;transform:scaleX(0.895);">0.0000</div>
<div class="f" style="left:230px;top:540px;width:120px;height:17px;"></div>
<div class="t" style="top:543.00px;font-size:12px;line-height:14px;color:#000;left:233.0px;transform-origin:0 0;transform:scaleX(0.895);">0</div>
<div class="f" style="left:94px;top:556px;width:113px;height:17px;"></div>
<div class="t" style="top:559.00px;font-size:12px;line-height:14px;color:#000;left:97.0px;transform-origin:0 0;transform:scaleX(0.895);">0.0000</div>
<div class="f" style="left:230px;top:556px;width:120px;height:17px;"></div>
<div class="t" style="top:559.00px;font-size:12px;line-height:14px;color:#000;left:233.0px;transform-origin:0 0;transform:scaleX(0.895);">0</div>
<div class="f" style="left:94px;top:572px;width:113px;height:17px;"></div>
<div class="t" style="top:575.00px;font-size:12px;line-height:14px;color:#000;left:97.0px;transform-origin:0 0;transform:scaleX(0.895);">0.0000</div>
<div class="f" style="left:230px;top:572px;width:120px;height:17px;"></div>
<div class="t" style="top:575.00px;font-size:12px;line-height:14px;color:#000;left:233.0px;transform-origin:0 0;transform:scaleX(0.895);">0</div>
<div class="f" style="left:94px;top:588px;width:113px;height:17px;"></div>
<div class="t" style="top:591.00px;font-size:12px;line-height:14px;color:#000;left:97.0px;transform-origin:0 0;transform:scaleX(0.895);">0.0000</div>
<div class="f" style="left:230px;top:588px;width:120px;height:17px;"></div>
<div class="t" style="top:591.00px;font-size:12px;line-height:14px;color:#000;left:233.0px;transform-origin:0 0;transform:scaleX(0.895);">0</div>
<div class="f" style="left:94px;top:604px;width:113px;height:17px;"></div>
<div class="t" style="top:607.00px;font-size:12px;line-height:14px;color:#000;left:97.0px;transform-origin:0 0;transform:scaleX(0.895);">0.0000</div>
<div class="f" style="left:230px;top:604px;width:120px;height:17px;"></div>
<div class="t" style="top:607.00px;font-size:12px;line-height:14px;color:#000;left:233.0px;transform-origin:0 0;transform:scaleX(0.895);">0</div>
<div class="f" style="left:94px;top:620px;width:113px;height:17px;"></div>
<div class="t" style="top:623.00px;font-size:12px;line-height:14px;color:#000;left:97.0px;transform-origin:0 0;transform:scaleX(0.895);">0.0000</div>
<div class="f" style="left:230px;top:620px;width:120px;height:17px;"></div>
<div class="t" style="top:623.00px;font-size:12px;line-height:14px;color:#000;left:233.0px;transform-origin:0 0;transform:scaleX(0.895);">0</div>
<div class="f" style="left:94px;top:636px;width:113px;height:17px;"></div>
<div class="t" style="top:639.00px;font-size:12px;line-height:14px;color:#000;left:97.0px;transform-origin:0 0;transform:scaleX(0.895);">0.0000</div>
<div class="f" style="left:230px;top:636px;width:120px;height:17px;"></div>
<div class="t" style="top:639.00px;font-size:12px;line-height:14px;color:#000;left:233.0px;transform-origin:0 0;transform:scaleX(0.895);">0</div>
<div class="f" style="left:94px;top:652px;width:113px;height:17px;"></div>
<div class="t" style="top:655.00px;font-size:12px;line-height:14px;color:#000;left:97.0px;transform-origin:0 0;transform:scaleX(0.895);">0.0000</div>
<div class="f" style="left:230px;top:652px;width:120px;height:17px;"></div>
<div class="t" style="top:655.00px;font-size:12px;line-height:14px;color:#000;left:233.0px;transform-origin:0 0;transform:scaleX(0.895);">0</div>
<div class="f" style="left:94px;top:668px;width:113px;height:17px;"></div>
<div class="t" style="top:671.00px;font-size:12px;line-height:14px;color:#000;left:97.0px;transform-origin:0 0;transform:scaleX(0.895);">0.0000</div>
<div class="f" style="left:230px;top:668px;width:120px;height:17px;"></div>
<div class="t" style="top:671.00px;font-size:12px;line-height:14px;color:#000;left:233.0px;transform-origin:0 0;transform:scaleX(0.895);">0</div>
<div class="f" style="left:94px;top:684px;width:113px;height:17px;"></div>
<div class="t" style="top:687.00px;font-size:12px;line-height:14px;color:#000;left:97.0px;transform-origin:0 0;transform:scaleX(0.895);">0.0000</div>
<div class="f" style="left:230px;top:684px;width:120px;height:17px;"></div>
<div class="t" style="top:687.00px;font-size:12px;line-height:14px;color:#000;left:233.0px;transform-origin:0 0;transform:scaleX(0.895);">0</div>
<div class="f" style="left:94px;top:700px;width:113px;height:17px;"></div>
<div class="t" style="top:703.00px;font-size:12px;line-height:14px;color:#000;left:97.0px;transform-origin:0 0;transform:scaleX(0.895);">0.0000</div>
<div class="f" style="left:230px;top:700px;width:120px;height:17px;"></div>
<div class="t" style="top:703.00px;font-size:12px;line-height:14px;color:#000;left:233.0px;transform-origin:0 0;transform:scaleX(0.895);">0</div>
<div class="f" style="left:94px;top:716px;width:113px;height:17px;"></div>
<div class="t" style="top:719.00px;font-size:12px;line-height:14px;color:#000;left:97.0px;transform-origin:0 0;transform:scaleX(0.895);">0.0000</div>
<div class="f" style="left:230px;top:716px;width:120px;height:17px;"></div>
<div class="t" style="top:719.00px;font-size:12px;line-height:14px;color:#000;left:233.0px;transform-origin:0 0;transform:scaleX(0.895);">0</div>
<div class="f" style="left:94px;top:732px;width:113px;height:18px;"></div>
<div class="t" style="top:735.00px;font-size:12px;line-height:14px;color:#000;left:97.0px;transform-origin:0 0;transform:scaleX(0.895);">0.0000</div>
<div class="f" style="left:230px;top:732px;width:120px;height:18px;"></div>
<div class="t" style="top:735.00px;font-size:12px;line-height:14px;color:#000;left:233.0px;transform-origin:0 0;transform:scaleX(0.895);">0</div>
<div style="left:166px;top:772px;width:105px;height:25px;background:#f0f0f0;border:1px solid #696969;box-shadow:inset 1px 1px 0 #fff,inset -1px -1px 0 #696969,inset -2px -2px 0 #a0a0a0"></div>
<div style="left:170px;top:776px;width:97.5px;height:17px;border:1px dotted #000"></div>
<div class="t" style="top:777.00px;font-size:12px;line-height:14px;color:#000;left:211.7px;transform-origin:0 0;transform:scaleX(0.819);">OK</div>
</body></html>
